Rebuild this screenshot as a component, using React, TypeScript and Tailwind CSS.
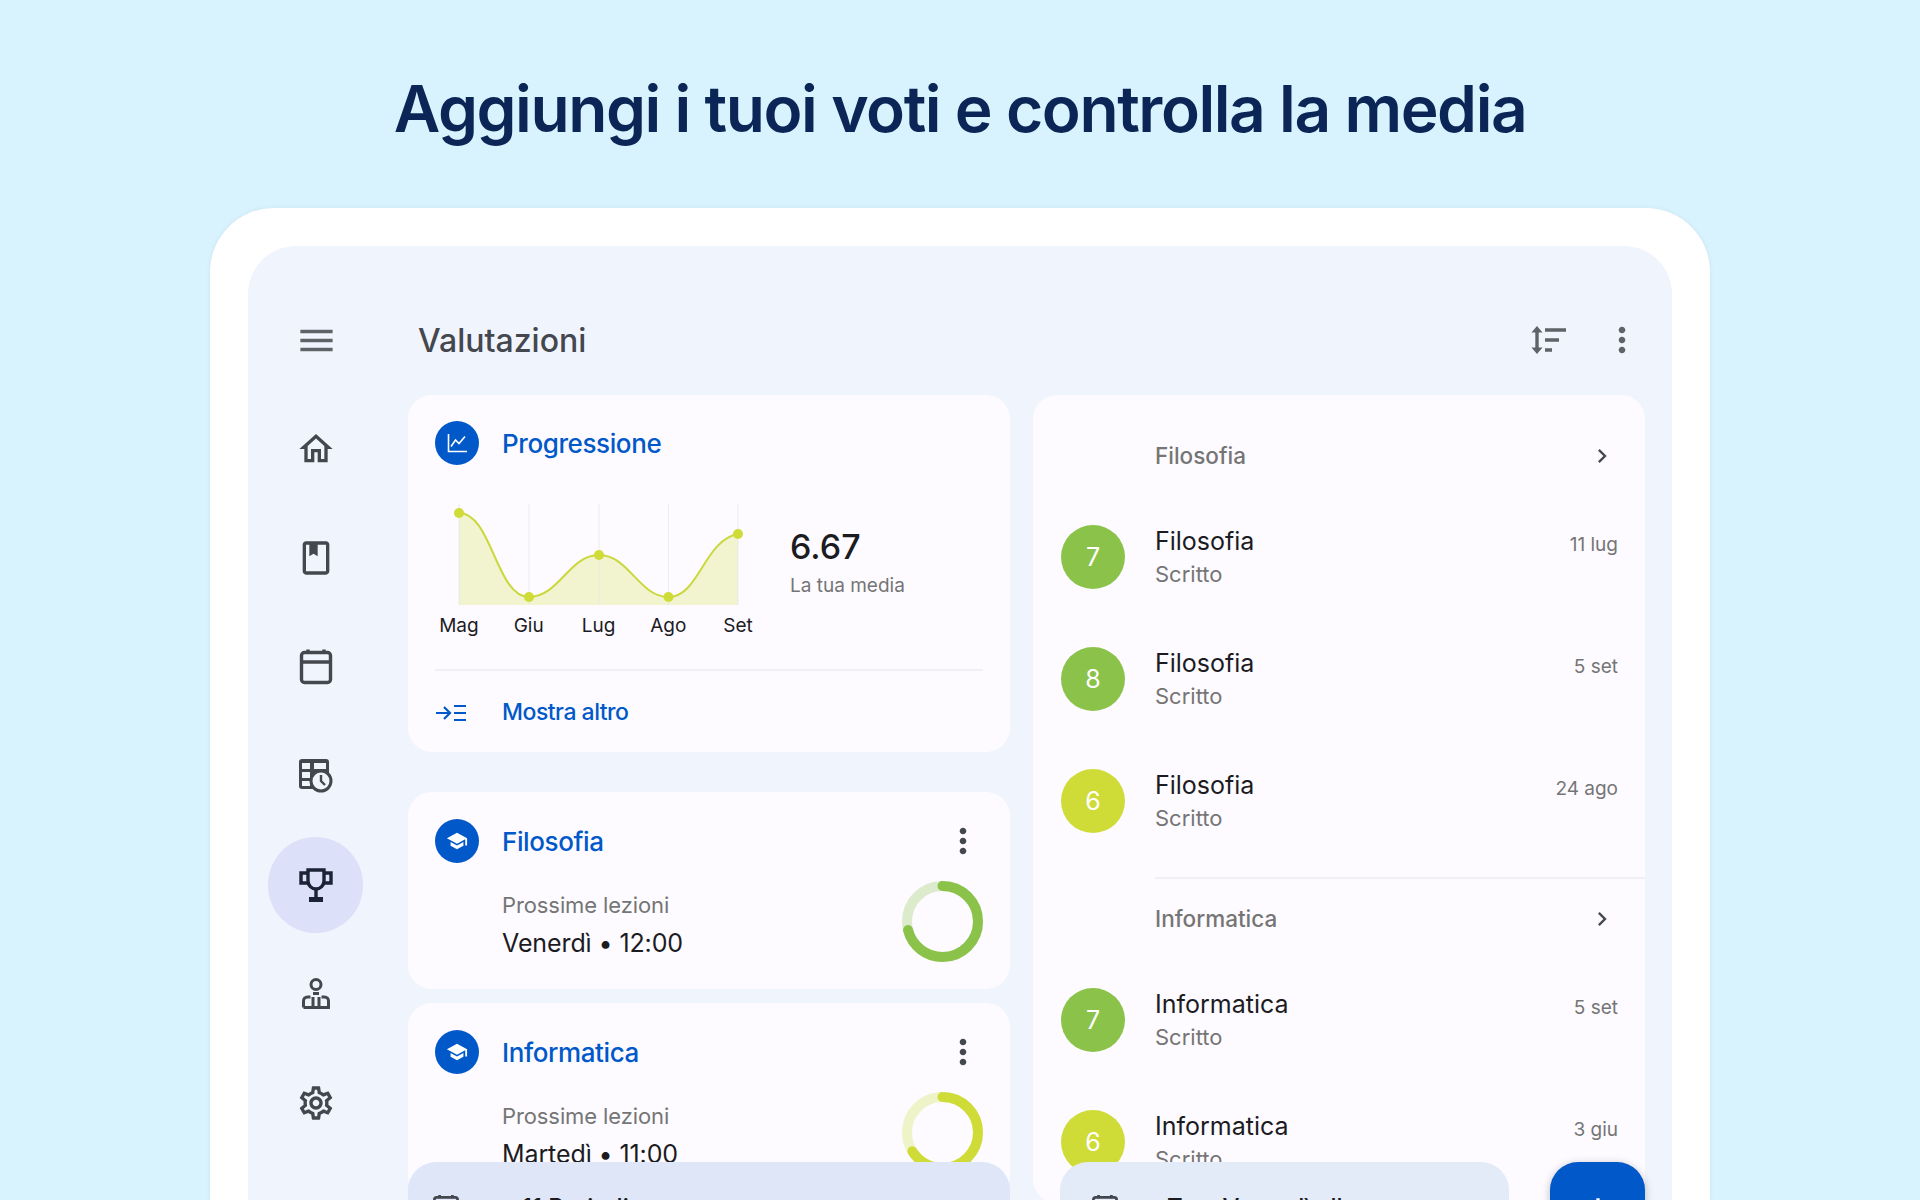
import { MdAdd, MdChevronRight, MdMenu, MdMoreVert, MdOutlineHome, MdOutlineSettings, MdSchool } from 'react-icons/md';

function BookIcon() {
  return (
    <svg width="40" height="40" viewBox="0 0 24 24" fill="#44474e">
      <path d="M18 2H6c-1.100 0-2 .9-2 2v16c0 1.100.9 2 2 2h12c1.100 0 2-.9 2-2V4c0-1.100-.9-2-2-2zm0 18H6V4h2v7l2.500-1.500L13 11V4h5v16z" />
    </svg>
  );
}

function CalendarIcon({ size = 40 }: { size?: number }) {
  return (
    <svg width={size} height={size} viewBox="0 0 40 40" fill="none" stroke="#44474e" strokeWidth="3.400">
      <rect x="5.500" y="5.500" width="29" height="30" rx="3" />
      <path d="M5.500 15h29M12 2.500v4M28 2.500v4" />
    </svg>
  );
}

function TableClockIcon() {
  return (
    <svg width="40" height="40" viewBox="0 0 40 40">
      <rect x="3" y="3" width="30" height="30" rx="3" fill="#44474e" />
      <rect x="6" y="7" width="8" height="6" fill="#f0f4fd" />
      <rect x="18" y="7" width="12" height="6" fill="#f0f4fd" />
      <rect x="6" y="16" width="8" height="6" fill="#f0f4fd" />
      <rect x="6" y="25" width="8" height="5" fill="#f0f4fd" />
      <circle cx="25" cy="25" r="10" fill="#f0f4fd" stroke="#44474e" strokeWidth="3" />
      <path d="M25 19v6l4 4" fill="none" stroke="#44474e" strokeWidth="2.400" />
    </svg>
  );
}

function TrophyIcon() {
  return (
    <svg width="40" height="40" viewBox="0 0 40 40" fill="none" stroke="#1b2336" strokeWidth="3.400">
      <path d="M12 5h16v11a8 8 0 0 1-16 0z" />
      <path d="M12 8H5v10h7M28 8h7v10h-7M20 24v8" />
      <rect x="13" y="32" width="14" height="5" fill="#1b2336" stroke="none" />
    </svg>
  );
}

function PersonIcon() {
  return (
    <svg width="40" height="40" viewBox="0 0 40 40" fill="none" stroke="#44474e" strokeWidth="3">
      <circle cx="20" cy="10.500" r="5" />
      <path d="M7.500 33.500h25V27a4 4 0 0 0-4-4h-3M14.500 23h-3a4 4 0 0 0-4 4v6.500M17 23v10.500M23 23v10.500M17 19.500h6" />
    </svg>
  );
}

function SortIcon() {
  return (
    <svg width="40" height="40" viewBox="0 0 40 40" fill="#5f6368">
      <path d="M8 6l5.500 6.500h-11zM8 34l5.500-6.500h-11z" />
      <path d="M8 10v20M16 10h21M16 20h14M16 30h7" fill="none" stroke="#5f6368" strokeWidth="3.400" />
    </svg>
  );
}

function GraphIcon() {
  return (
    <svg width="24" height="24" viewBox="0 0 24 24" fill="none" stroke="#fff" strokeWidth="1.600">
      <path d="M3.500 3v17.500H22" />
      <path d="M6 15.500l4.500-6.500 3.500 3.500 6-7" />
    </svg>
  );
}

function ShowMoreIcon() {
  return (
    <svg width="32" height="24" viewBox="0 0 32 24" fill="none" stroke="#0058c9" strokeWidth="2.200">
      <path d="M1 12h14M9 6l6 6-6 6M19 5h12M19 12h12M19 19h12" />
    </svg>
  );
}

function Ring({ value, color, track }: { value: number; color: string; track: string }) {
  const r = 35.5;
  const c = 2 * Math.PI * r;
  return (
    <svg width="81" height="81" viewBox="0 0 81 81" fill="none" strokeWidth="10" className="-rotate-90">
      <circle cx="40.500" cy="40.500" r={r} stroke={track} />
      <circle cx="40.500" cy="40.500" r={r} stroke={color} strokeLinecap="round" strokeDasharray={`${c * value} ${c}`} />
    </svg>
  );
}

function ProgressChart() {
  const points = [[35, 9], [105, 93], [175, 51], [244.5, 93], [314, 30]];
  const line = 'M35 9C68 9 72 93 105 93C135 93 145 51 175 51C205 51 215 93 244.500 93C275 93 280 36 314 30';
  return (
    <svg width="349" height="101" viewBox="0 0 349 101" fill="none" className="block">
      <path d={`${line}V101H35Z`} fill="#f1f4cf" />
      {points.map(([x]) => (
        <path key={x} d={`M${x} 0V101`} stroke="#e4e4e8" strokeOpacity="0.700" />
      ))}
      <path d={line} stroke="#cbd83d" strokeWidth="2" />
      {points.map(([x, y]) => (
        <circle key={x} cx={x} cy={y} r="5" fill="#cfdc37" />
      ))}
    </svg>
  );
}

function SubjectCard({ name, day, value, color, track }: { name: string; day: string; value: number; color: string; track: string }) {
  return (
    <div className="h-[197px] shrink-0 rounded-[24px] bg-[#fdfbff] pl-[27px] pr-[27px] pt-[27px]">
      <div className="flex h-[44px] items-center">
        <div className="flex h-[44px] w-[44px] items-center justify-center rounded-full bg-[#0058c9]">
          <MdSchool size={22} color="#fff" />
        </div>
        <div className="ml-[23px] mt-[1px] text-[26px] font-medium tracking-[-0.400px] text-[#0058c9]">{name}</div>
        <MdMoreVert size={40} color="#44474e" className="ml-auto" />
      </div>
      <div className="flex">
        <div className="pl-[67px] pt-[24px]">
          <div className="h-[36px] text-[22px] leading-[36px] tracking-[-0.100px] text-[#757575]">Prossime lezioni</div>
          <div className="mt-[1px] h-[38px] text-[25px] leading-[38px] tracking-[-0.100px] text-[#1c1b1f]">{day}</div>
        </div>
        <div className="ml-auto mt-[18px]">
          <Ring value={value} color={color} track={track} />
        </div>
      </div>
    </div>
  );
}

function GradeRow({ title, grade, date, color }: { title: string; grade: number; date: string; color: string }) {
  return (
    <div className="flex h-[122px] items-center px-[27px] pl-[28px]">
      <div className="flex h-[64px] w-[64px] shrink-0 items-center justify-center rounded-full pt-[2px] text-[25px] text-white" style={{ backgroundColor: color }}>
        {grade}
      </div>
      <div className="ml-[30px] -translate-y-[1px]">
        <div className="h-[37px] text-[25px] leading-[37px] text-[#1c1b1f]">{title}</div>
        <div className="h-[29px] text-[22px] leading-[29px] text-[#757575]">Scritto</div>
      </div>
      <div className="ml-auto -translate-y-[12px] text-[19px] text-[#757575]">{date}</div>
    </div>
  );
}

function SectionHeader({ name }: { name: string }) {
  return (
    <div className="flex h-[80px] items-center pl-[122px] pr-[28px]">
      <div className="text-[22.500px] font-medium text-[#757575]">{name}</div>
      <MdChevronRight size={28} color="#44474e" className="ml-auto mr-[1px]" />
    </div>
  );
}

export default function App() {
  const navIcons = [
    <MdOutlineHome key="home" size={40} color="#44474e" />,
    <BookIcon key="book" />,
    <CalendarIcon key="calendar" />,
    <TableClockIcon key="table" />,
    <TrophyIcon key="trophy" />,
    <PersonIcon key="person" />,
    <MdOutlineSettings key="settings" size={40} color="#44474e" />,
  ];

  return (
    <div className="h-[1200px] w-[1920px] overflow-hidden bg-[#d9f3fe] font-['Inter',sans-serif]">
      <div className="flex h-[208px] items-center justify-center pt-[10px]">
        <h1 className="text-[64px] font-semibold tracking-[-1.420px] text-[#0b2556]">Aggiungi i tuoi voti e controlla la media</h1>
      </div>

      <div className="mx-[210px] h-[992px] rounded-t-[64px] bg-white px-[38px] pt-[38px] shadow-[0_0_4px_rgba(0,40,80,0.08)]">
        <div className="relative flex h-[954px] overflow-hidden rounded-t-[48px] bg-[#f0f4fd]">
          <aside className="flex w-[160px] shrink-0 flex-col gap-[13px] pl-[20px] pt-[46px]">
            <div className="flex h-[96px] w-[96px] shrink-0 items-center justify-center">
              <MdMenu size={43} color="#5f6368" />
            </div>
            {navIcons.map((icon, i) => (
              <div key={i} className={`flex h-[96px] w-[95px] shrink-0 items-center justify-center rounded-full ${i === 4 ? 'bg-[#dce1f9]' : ''}`}>
                {icon}
              </div>
            ))}
          </aside>

          <main className="min-w-0 flex-1">
            <header className="mb-[7px] mt-[46px] flex h-[96px] items-center pl-[10px] pr-[30px]">
              <div className="mt-[1px] text-[32px] font-medium text-[#44474e]">Valutazioni</div>
              <div className="ml-auto flex items-center gap-[33px]">
                <SortIcon />
                <MdMoreVert size={40} color="#5f6368" />
              </div>
            </header>

            <div className="flex gap-[23px]">
              <div className="flex w-[602px] shrink-0 flex-col">
                <div className="flex h-[357px] flex-col rounded-[24px] bg-[#fdfbff] px-[27px] pt-[26px]">
                  <div className="flex h-[44px] items-center">
                    <div className="flex h-[44px] w-[44px] items-center justify-center rounded-full bg-[#0058c9]">
                      <GraphIcon />
                    </div>
                    <div className="ml-[23px] text-[26px] font-medium tracking-[-0.400px] text-[#0058c9]">Progressione</div>
                  </div>
                  <div className="-ml-[11px] mt-[39px] flex">
                    <div className="w-[349px]">
                      <ProgressChart />
                      <div className="mt-[9px] grid grid-cols-5 text-center text-[19px] leading-[24px] text-[#1c1b1f]">
                        <span>Mag</span>
                        <span>Giu</span>
                        <span>Lug</span>
                        <span>Ago</span>
                        <span>Set</span>
                      </div>
                    </div>
                    <div className="ml-[17px] mt-[21px]">
                      <div className="text-[34px] font-medium leading-[44px] text-[#1c1b1f]">6.67</div>
                      <div className="mt-[3px] text-[19px] leading-[28px] text-[#757575]">La tua media</div>
                    </div>
                  </div>
                  <div className="mt-[31px] h-[2px] bg-[#f0eff4]" />
                  <div className="flex flex-1 items-center pt-[2px]">
                    <ShowMoreIcon />
                    <div className="ml-[35px] text-[23px] font-medium tracking-[-0.500px] text-[#0058c9]">Mostra altro</div>
                  </div>
                </div>

                <div className="mt-[40px] flex flex-col gap-[14px]">
                  <SubjectCard name="Filosofia" day="Venerdì • 12:00" value={0.71} color="#8bc34a" track="#dcebcb" />
                  <SubjectCard name="Informatica" day="Martedì • 11:00" value={0.66} color="#cfdc37" track="#eef3c8" />
                </div>
              </div>

              <div className="w-[612px] shrink-0 rounded-[24px] bg-[#fdfbff] pt-[21px]">
                <SectionHeader name="Filosofia" />
                <GradeRow title="Filosofia" grade={7} date="11 lug" color="#8bc34a" />
                <GradeRow title="Filosofia" grade={8} date="5 set" color="#8bc34a" />
                <GradeRow title="Filosofia" grade={6} date="24 ago" color="#cfdc37" />
                <div className="ml-[122px] mt-[15px] h-[2px] bg-[#f0eff4]" />
                <SectionHeader name="Informatica" />
                <GradeRow title="Informatica" grade={7} date="5 set" color="#8bc34a" />
                <GradeRow title="Informatica" grade={6} date="3 giu" color="#cfdc37" />
              </div>
            </div>
          </main>

          <div className="absolute left-[160px] top-[916px] flex h-[96px] w-[602px] rounded-t-[28px] bg-[#dfe6f8] pl-[22px] pt-[31px]">
            <CalendarIcon size={32} />
            <div className="ml-[60px] mt-[-3px] text-[24px] font-medium text-[#1c1b1f]">11 Periodi</div>
          </div>
          <div className="absolute left-[812px] top-[916px] flex h-[96px] w-[449px] rounded-t-[28px] bg-[#e4ebf8] pl-[29px] pt-[31px]">
            <CalendarIcon size={32} />
            <div className="ml-[46px] mt-[-3px] text-[24px] font-medium text-[#1c1b1f]">Test Venerdì alle</div>
          </div>
          <div className="absolute left-[1302px] top-[916px] flex h-[96px] w-[95px] items-center justify-center rounded-[28px] bg-[#0058c9] shadow-[0_2px_8px_rgba(0,0,0,0.25)]">
            <MdAdd size={40} color="#fff" />
          </div>
        </div>
      </div>
    </div>
  );
}
